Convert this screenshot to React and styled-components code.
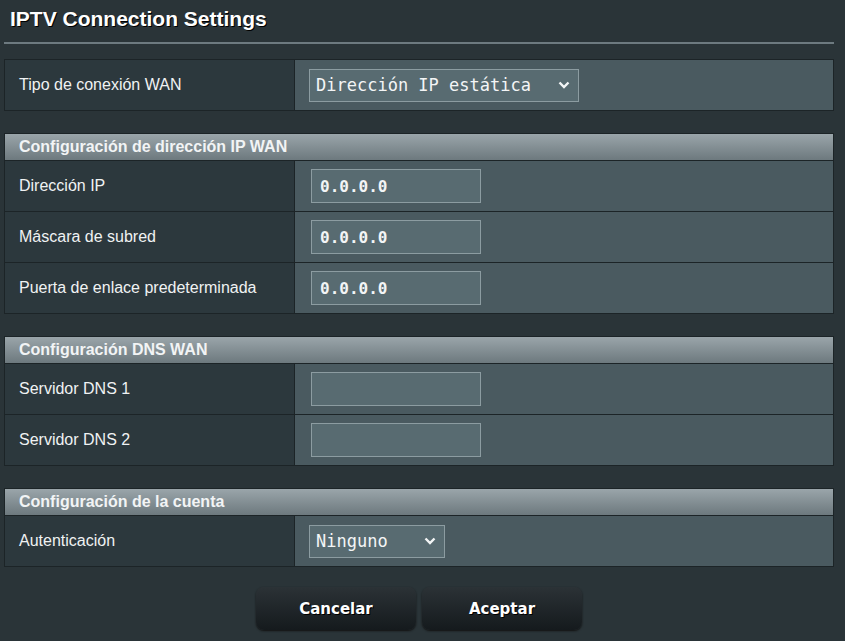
import React from "react";
import styled, { createGlobalStyle } from "styled-components";

const GlobalStyle = createGlobalStyle`
  body {
    margin: 0;
    background: #2a3438;
    font-family: "Liberation Sans", Arial, sans-serif;
  }
`;

const Page = styled.div`
  width: 845px;
  height: 641px;
  padding: 0 11px 0 4px;
  box-sizing: border-box;
  display: flex;
  flex-direction: column;
`;

const Title = styled.h1`
  margin: 0;
  padding: 7px 0 0 6px;
  height: 35px;
  font-size: 21px;
  font-weight: bold;
  color: #fff;
  text-shadow: 1px 1px 0 #000;
  border-bottom: 2px solid #6d7a80;
  margin-bottom: 15px;
`;

const Table = styled.div`
  border: 1px solid #1c2427;
  margin-bottom: 22px;
`;

const Header = styled.div`
  height: 26px;
  padding-left: 14px;
  display: flex;
  align-items: center;
  font-size: 16px;
  font-weight: bold;
  color: #f2f4f5;
  background: linear-gradient(#9aa5aa, #6d797e);
  border-bottom: 1px solid #1c2427;
`;

const Row = styled.div`
  display: grid;
  grid-template-columns: 290px 1fr;
  height: 50px;
  & + & {
    border-top: 1px solid #1c2427;
  }
`;

const Label = styled.div`
  background: #2c383d;
  color: #f0f2f3;
  font-size: 16px;
  padding-left: 14px;
  display: flex;
  align-items: center;
  border-right: 1px solid #1c2427;
`;

const Value = styled.div`
  background: #4a5a60;
  display: flex;
  align-items: center;
  padding-left: ${(p) => p.$pad || 16}px;
`;

const Input = styled.input`
  width: 170px;
  height: 34px;
  box-sizing: border-box;
  background: #586b71;
  border: 1px solid #8c9ca1;
  color: #f3f5f6;
  font-family: "DejaVu Sans Mono", "Liberation Mono", monospace;
  font-weight: bold;
  font-size: 16px;
  padding: 0 8px;
  outline: none;
`;

const SelectBox = styled.div`
  width: ${(p) => p.$w}px;
  height: 33px;
  box-sizing: border-box;
  background: #586b71;
  border: 1px solid #8c9ca1;
  color: #f3f5f6;
  font-family: "DejaVu Sans Mono", "Liberation Mono", monospace;
  font-size: 17px;
  display: flex;
  align-items: center;
  justify-content: space-between;
  padding: 0 8px 0 6px;
`;

const Buttons = styled.div`
  display: flex;
  justify-content: center;
  gap: 6px;
  margin-top: -2px;
`;

const Button = styled.button`
  width: 160px;
  height: 43px;
  border: none;
  border-radius: 8px;
  background: linear-gradient(#2b3236, #151a1d);
  box-shadow: 0 1px 2px #111;
  color: #fff;
  font-family: "DejaVu Sans", Verdana, sans-serif;
  font-weight: bold;
  font-size: 15px;
  text-shadow: 1px 1px 0 #000;
`;

const Chevron = () => (
  <svg width="12" height="8" viewBox="0 0 12 8">
    <path d="M1.5 1.5 L6 6 L10.5 1.5" fill="none" stroke="#f3f5f6" strokeWidth="2.4" />
  </svg>
);

const Select = ({ w, children }) => (
  <SelectBox $w={w}>
    <span>{children}</span>
    <Chevron />
  </SelectBox>
);

const App = () => (
  <Page>
    <GlobalStyle />
    <Title>IPTV Connection Settings</Title>

    <Table>
      <Row>
        <Label>Tipo de conexión WAN</Label>
        <Value $pad={14}>
          <Select w={270}>Dirección IP estática</Select>
        </Value>
      </Row>
    </Table>

    <Table>
      <Header>Configuración de dirección IP WAN</Header>
      <Row>
        <Label>Dirección IP</Label>
        <Value><Input defaultValue="0.0.0.0" /></Value>
      </Row>
      <Row>
        <Label>Máscara de subred</Label>
        <Value><Input defaultValue="0.0.0.0" /></Value>
      </Row>
      <Row>
        <Label>Puerta de enlace predeterminada</Label>
        <Value><Input defaultValue="0.0.0.0" /></Value>
      </Row>
    </Table>

    <Table>
      <Header>Configuración DNS WAN</Header>
      <Row>
        <Label>Servidor DNS 1</Label>
        <Value><Input /></Value>
      </Row>
      <Row>
        <Label>Servidor DNS 2</Label>
        <Value><Input /></Value>
      </Row>
    </Table>

    <Table>
      <Header>Configuración de la cuenta</Header>
      <Row>
        <Label>Autenticación</Label>
        <Value $pad={14}>
          <Select w={136}>Ninguno</Select>
        </Value>
      </Row>
    </Table>

    <Buttons>
      <Button>Cancelar</Button>
      <Button>Aceptar</Button>
    </Buttons>
  </Page>
);

export default App;
